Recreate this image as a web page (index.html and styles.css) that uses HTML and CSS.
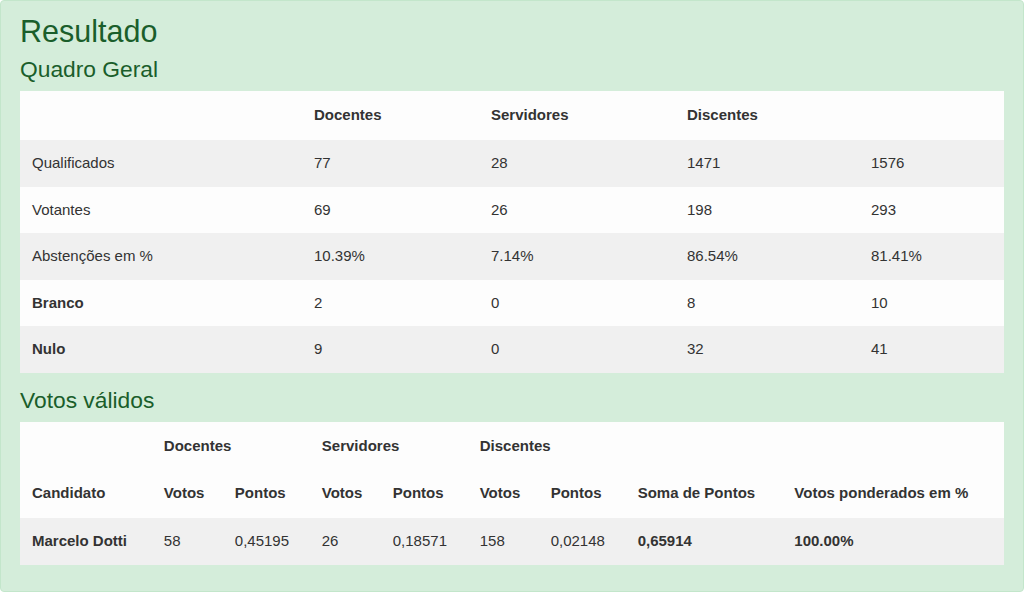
FILE: index.html
```html
<!DOCTYPE html>
<html lang="pt-BR">
<head>
    <meta charset="UTF-8">
    <meta name="viewport" content="width=device-width, initial-scale=1.0">
    <title>Resultado</title>
    <link rel="stylesheet" href="styles.css">
</head>
<body>
    <div class="result-panel">
        <h2 class="result-title">Resultado</h2>

        <h4 class="section-title">Quadro Geral</h4>
        <table class="result-table general">
            <thead>
                <tr>
                    <th class="c1"></th>
                    <th class="c2">Docentes</th>
                    <th class="c3">Servidores</th>
                    <th class="c4">Discentes</th>
                    <th class="c5"></th>
                </tr>
            </thead>
            <tbody>
                <tr>
                    <td>Qualificados</td>
                    <td>77</td>
                    <td>28</td>
                    <td>1471</td>
                    <td>1576</td>
                </tr>
                <tr>
                    <td>Votantes</td>
                    <td>69</td>
                    <td>26</td>
                    <td>198</td>
                    <td>293</td>
                </tr>
                <tr>
                    <td>Abstenções em %</td>
                    <td>10.39%</td>
                    <td>7.14%</td>
                    <td>86.54%</td>
                    <td>81.41%</td>
                </tr>
                <tr>
                    <th>Branco</th>
                    <td>2</td>
                    <td>0</td>
                    <td>8</td>
                    <td>10</td>
                </tr>
                <tr>
                    <th>Nulo</th>
                    <td>9</td>
                    <td>0</td>
                    <td>32</td>
                    <td>41</td>
                </tr>
            </tbody>
        </table>

        <h4 class="section-title">Votos válidos</h4>
        <table class="result-table valid">
            <thead>
                <tr class="group-row">
                    <th></th>
                    <th colspan="2">Docentes</th>
                    <th colspan="2">Servidores</th>
                    <th colspan="2">Discentes</th>
                    <th></th>
                    <th></th>
                </tr>
                <tr class="label-row">
                    <th class="v1">Candidato</th>
                    <th class="v2">Votos</th>
                    <th class="v3">Pontos</th>
                    <th class="v2">Votos</th>
                    <th class="v3">Pontos</th>
                    <th class="v2">Votos</th>
                    <th class="v3">Pontos</th>
                    <th class="v4">Soma de Pontos</th>
                    <th class="v5">Votos ponderados em %</th>
                </tr>
            </thead>
            <tbody>
                <tr>
                    <th>Marcelo Dotti</th>
                    <td>58</td>
                    <td>0,45195</td>
                    <td>26</td>
                    <td>0,18571</td>
                    <td>158</td>
                    <td>0,02148</td>
                    <th>0,65914</th>
                    <th>100.00%</th>
                </tr>
            </tbody>
        </table>
    </div>
</body>
</html>
```

FILE: styles.css
```css
* {
    margin: 0;
    padding: 0;
    box-sizing: border-box;
}

body {
    font-family: "Liberation Sans", Arial, sans-serif;
    font-size: 15px;
    color: #333333;
    background: #ffffff;
}

.result-panel {
    height: 592px;
    background: #d4edda;
    border: 1px solid #c3e6cb;
    border-radius: 4px;
    padding: 12px 19px;
    color: #1a5e2b;
}

.result-title {
    font-size: 30.5px;
    font-weight: 400;
    line-height: 1.2;
    margin-bottom: 6px;
}

.section-title {
    font-size: 22.8px;
    font-weight: 400;
    line-height: 1.2;
    margin-bottom: 8px;
}

.result-table {
    width: 100%;
    border-collapse: collapse;
    background: #fdfdfd;
    color: #333333;
    margin-bottom: 14px;
}

.result-table th,
.result-table td {
    padding: 12px;
    line-height: 1.5;
    text-align: left;
    vertical-align: top;
}

.result-table th {
    font-weight: 700;
}

.general thead th {
    border-top: 1px solid #fdfdfd;
    border-bottom: 2px solid #fdfdfd;
}

.valid .group-row th {
    border-top: 1px solid #fdfdfd;
}

.valid .label-row th {
    border-bottom: 2px solid #fdfdfd;
}

.result-table tbody tr:nth-child(odd) {
    background: #f0f0f0;
}

.general .c1 { width: 282px; }
.general .c2 { width: 177px; }
.general .c3 { width: 196px; }
.general .c4 { width: 184px; }
.general .c5 { width: 145px; }

.valid .v1 { width: 132px; }
.valid .v2 { width: 71px; }
.valid .v3 { width: 87px; }
.valid .v4 { width: 157px; }
.valid .v5 { width: 222px; }
```
